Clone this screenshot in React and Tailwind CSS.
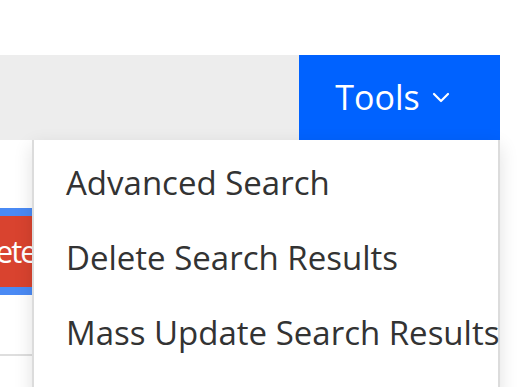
import React from 'react';

function ToolsMenu() {
  const items = ['Advanced Search', 'Delete Search Results', 'Mass Update Search Results'];
  return (
    <div className="absolute left-[32px] top-[140px] w-[468px] h-[260px] bg-white border-x-2 border-[#dcdcdc] shadow-[0_6px_18px_rgba(0,0,0,0.12)]">
      <ul className="pt-[19px]">
        {items.map((item) => (
          <li key={item} className="h-[75px] pl-[32px] text-[33px] leading-[48px] text-[#333] whitespace-nowrap">
            {item}
          </li>
        ))}
      </ul>
    </div>
  );
}

export default function App() {
  return (
    <div className="relative w-[518px] h-[387px] overflow-hidden bg-white font-['Open_Sans',sans-serif]">
      <div className="h-[55px]" />
      <div className="flex h-[85px]">
        <div className="flex-1 bg-[#ededed]" />
        <button className="w-[201px] bg-[#0062ff] text-white text-[34px] flex items-center justify-center gap-[12px] pr-[14px]">
          <span>Tools</span>
          <svg width="18" height="11" viewBox="0 0 18 11" fill="none" stroke="white" strokeWidth="2.2" strokeLinecap="round" strokeLinejoin="round">
            <path d="M2 2l7 7 7-7" />
          </svg>
        </button>
        <div className="w-[18px]" />
      </div>
      <div className="pt-[68px]">
        <div className="flex -ml-[58px]">
          <button className="h-[87px] border-y-[8px] border-[#4a8af4] bg-[#d9432f] pl-[12px] pr-[24px] text-white text-[31px] tracking-[-2px]">
            Delete
          </button>
        </div>
        <div className="mt-[59px] h-[2px] w-[40px] bg-[#dedede]" />
      </div>
      <ToolsMenu />
    </div>
  );
}
